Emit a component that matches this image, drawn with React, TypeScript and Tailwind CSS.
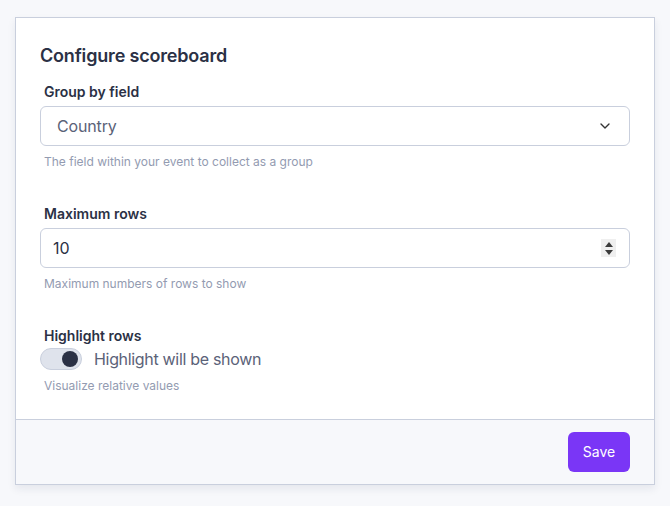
import { ChevronDown } from "lucide-react"

const Label = ({ children }: { children: React.ReactNode }) => (
  <div className="px-1 text-sm leading-5 font-semibold text-[#2b3145]">{children}</div>
)

const Help = ({ children, className = "mt-2" }: { children: React.ReactNode; className?: string }) => (
  <div className={`${className} px-1 text-xs leading-4 text-[#939bb1]`}>{children}</div>
)

const App = () => {
  return (
    <div
      className="min-h-[506px] bg-[#f7f8fb] px-[15px] pt-[17px]"
      style={{ fontFamily: "Inter, 'Noto Sans', sans-serif" }}
    >
      <div className="w-[640px] border border-[#c9cfdd] bg-white shadow-[0_4px_8px_rgba(30,40,80,0.08)]">
        <div className="px-6 pt-6 pb-[25px]">
          <h2 className="text-lg leading-7 font-semibold tracking-[-0.01em] text-[#2b3145]">
            Configure scoreboard
          </h2>

          <div className="mt-3">
            <Label>Group by field</Label>
            <div className="mt-1 flex h-10 items-center justify-between rounded-md border border-[#c9cfdd] pr-4 pl-4">
              <span className="text-base tracking-[-0.01em] text-[#5b6278]">Country</span>
              <ChevronDown className="h-4 w-4 text-[#333]" strokeWidth={2} />
            </div>
            <Help>The field within your event to collect as a group</Help>
          </div>

          <div className="mt-[34px]">
            <Label>Maximum rows</Label>
            <div className="mt-1 flex h-10 items-center justify-between rounded-md border border-[#c9cfdd] pr-[13px] pl-3">
              <span className="text-base text-[#2b3145]">10</span>
              <div className="flex h-[18px] w-[15px] flex-col items-center justify-center gap-[3px] bg-[#efefef]">
                <svg width="8" height="5" viewBox="0 0 8 5">
                  <path d="M4 0 L8 5 L0 5 Z" fill="#3b3b3b" />
                </svg>
                <svg width="8" height="5" viewBox="0 0 8 5">
                  <path d="M0 0 L8 0 L4 5 Z" fill="#3b3b3b" />
                </svg>
              </div>
            </div>
            <Help>Maximum numbers of rows to show</Help>
          </div>

          <div className="mt-[34px]">
            <Label>Highlight rows</Label>
            <div className="mt-[1px] flex h-6 items-center gap-3">
              <div className="flex h-[22px] w-[42px] items-center justify-end rounded-full border border-[#c9cfdd] bg-[#dfe3ec] pr-[3px]">
                <div className="h-4 w-4 rounded-full bg-[#2b3145]" />
              </div>
              <span className="text-base tracking-[-0.02em] text-[#5b6278]">Highlight will be shown</span>
            </div>
            <Help className="mt-[7px]">Visualize relative values</Help>
          </div>
        </div>

        <div className="flex justify-end border-t border-[#c9cfdd] bg-[#f7f8fb] px-6 py-3">
          <button className="h-10 w-[62px] rounded-md bg-[#7a36f6] text-sm text-white">Save</button>
        </div>
      </div>
    </div>
  )
}

export default App
